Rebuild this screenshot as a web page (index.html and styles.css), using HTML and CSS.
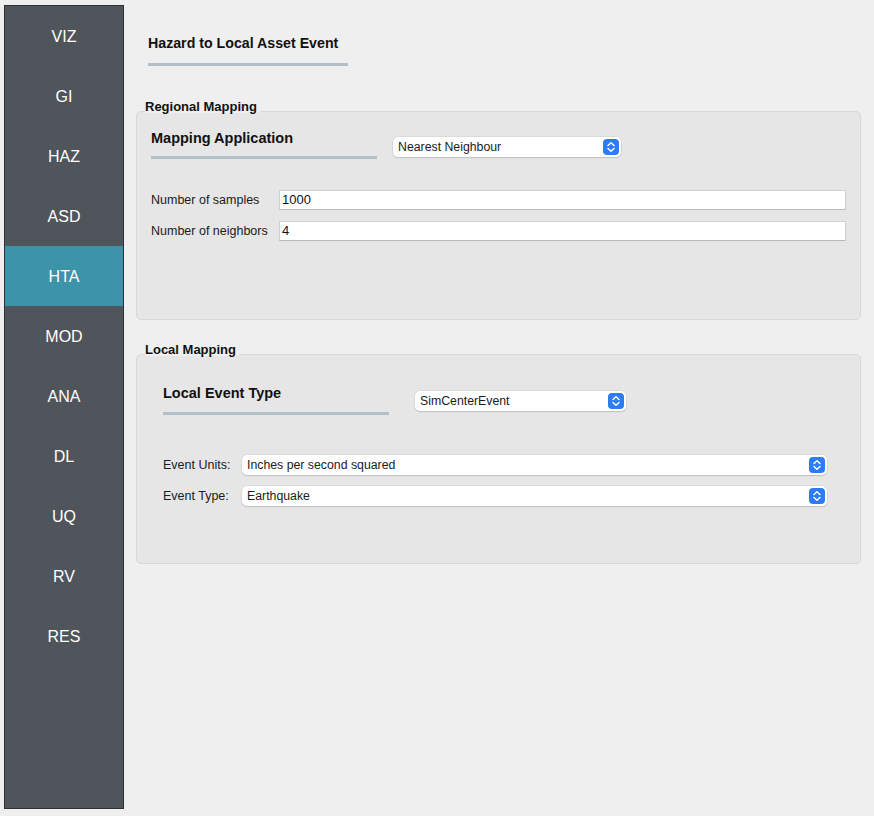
FILE: index.html
```html
<!DOCTYPE html>
<html>
<head>
<meta charset="utf-8">
<link rel="stylesheet" href="styles.css">
</head>
<body>
<div class="app">
  <nav class="sidebar">
    <div class="nav-item">VIZ</div>
    <div class="nav-item">GI</div>
    <div class="nav-item">HAZ</div>
    <div class="nav-item">ASD</div>
    <div class="nav-item active">HTA</div>
    <div class="nav-item">MOD</div>
    <div class="nav-item">ANA</div>
    <div class="nav-item">DL</div>
    <div class="nav-item">UQ</div>
    <div class="nav-item">RV</div>
    <div class="nav-item">RES</div>
  </nav>
  <main class="main">
    <div class="page-title">Hazard to Local Asset Event</div>
    <div class="title-rule"></div>

    <div class="group-label first">Regional Mapping</div>
    <section class="group regional">
      <div class="head-row">
        <div class="head-col">
          <div class="head">Mapping Application</div>
          <div class="rule"></div>
        </div>
        <div class="combo combo-map"><span>Nearest Neighbour</span><i class="arrows"><svg viewBox="0 0 16 16" width="16" height="16"><path d="M5 6.5 L8 3.8 L11 6.5 M5 9.5 L8 12.2 L11 9.5" fill="none" stroke="#fff" stroke-width="1.5" stroke-linecap="round" stroke-linejoin="round"/></svg></i></div>
      </div>
      <div class="form-grid">
        <label class="lbl">Number of samples</label>
        <div class="input">1000</div>
        <label class="lbl">Number of neighbors</label>
        <div class="input">4</div>
      </div>
    </section>

    <div class="group-label second">Local Mapping</div>
    <section class="group local">
      <div class="head-row">
        <div class="head-col">
          <div class="head">Local Event Type</div>
          <div class="rule"></div>
        </div>
        <div class="combo combo-evt"><span>SimCenterEvent</span><i class="arrows"><svg viewBox="0 0 16 16" width="16" height="16"><path d="M5 6.5 L8 3.8 L11 6.5 M5 9.5 L8 12.2 L11 9.5" fill="none" stroke="#fff" stroke-width="1.5" stroke-linecap="round" stroke-linejoin="round"/></svg></i></div>
      </div>
      <div class="form-grid2">
        <label class="lbl">Event Units:</label>
        <div class="combo"><span>Inches per second squared</span><i class="arrows"><svg viewBox="0 0 16 16" width="16" height="16"><path d="M5 6.5 L8 3.8 L11 6.5 M5 9.5 L8 12.2 L11 9.5" fill="none" stroke="#fff" stroke-width="1.5" stroke-linecap="round" stroke-linejoin="round"/></svg></i></div>
        <label class="lbl">Event Type:</label>
        <div class="combo"><span>Earthquake</span><i class="arrows"><svg viewBox="0 0 16 16" width="16" height="16"><path d="M5 6.5 L8 3.8 L11 6.5 M5 9.5 L8 12.2 L11 9.5" fill="none" stroke="#fff" stroke-width="1.5" stroke-linecap="round" stroke-linejoin="round"/></svg></i></div>
      </div>
    </section>
  </main>
</div>
</body>
</html>
```
FILE: styles.css
```css
* { box-sizing: border-box; }
html, body { margin: 0; padding: 0; }
body {
  background: #efefef;
  font-family: "Liberation Sans", Arial, sans-serif;
  color: #1b1b1b;
  width: 874px;
  height: 816px;
  overflow: hidden;
}
.app { display: flex; align-items: flex-start; }

.sidebar {
  margin: 5px 0 0 4px;
  width: 120px;
  height: 804px;
  background: #50545b;
  border: 1px solid #2e3136;
  display: flex;
  flex-direction: column;
}
.nav-item {
  height: 60px;
  padding-top: 2px;
  display: flex;
  align-items: center;
  justify-content: center;
  color: #ffffff;
  font-size: 16px;
}
.nav-item.active { background: #3d93a7; }

.main {
  flex: 1;
  padding: 33px 13px 0 12px;
}
.page-title {
  margin-left: 12px;
  font-size: 14.2px;
  font-weight: bold;
  line-height: 20px;
  color: #111;
}
.title-rule {
  margin: 10px 0 0 12px;
  width: 200px;
  height: 3px;
  background: #b2bfc6;
}
.group-label {
  position: relative;
  z-index: 1;
  display: table;
  margin-left: 9px;
  margin-bottom: -2px;
  padding-right: 3px;
  background: #efefef;
  font-size: 13px;
  font-weight: bold;
  line-height: 13px;
  color: #111;
}
.group-label.first { margin-top: 34px; }
.group-label.second { margin-top: 23px; }

.group {
  background: #e6e6e6;
  border: 1px solid #d8d8d8;
  border-radius: 5px;
}
.group.regional { height: 209px; padding: 17px 14px 0 14px; }
.group.local { height: 210px; padding: 29px 33px 0 26px; }

.head-row { display: flex; align-items: flex-start; }
.head-col { width: 226px; }
.head {
  font-size: 14.5px;
  font-weight: bold;
  line-height: 18px;
  color: #111;
}
.rule { height: 3px; background: #b2bfc6; }
.regional .rule { margin-top: 9px; }
.local .rule { margin-top: 10px; }

.combo {
  position: relative;
  height: 20px;
  background: #ffffff;
  border-radius: 5px;
  box-shadow: 0 0 0 0.5px #cfcfcf, 0 1px 1px rgba(0,0,0,0.22);
  font-size: 12.3px;
  line-height: 20px;
  padding-left: 5px;
  color: #1b1b1b;
}
.arrows {
  position: absolute;
  right: 2px;
  top: 2px;
  width: 16px;
  height: 16px;
  border-radius: 4px;
  background: #2c7cf6;
  display: flex;
}
.combo-map { width: 228px; margin: 8px 0 0 16px; }
.combo-evt { width: 211px; margin: 7px 0 0 26px; }

.form-grid {
  margin-top: 31px;
  display: grid;
  grid-template-columns: 128px 1fr;
  row-gap: 11px;
  align-items: center;
}
.form-grid2 {
  margin-top: 40px;
  display: grid;
  grid-template-columns: 79px 1fr;
  row-gap: 11px;
  align-items: center;
}
.lbl { font-size: 12.5px; color: #1b1b1b; }
.input {
  height: 20px;
  background: #ffffff;
  border: 1px solid #d0d0d0;
  border-bottom-color: #b9b9b9;
  font-size: 13px;
  line-height: 18px;
  padding-left: 2px;
  color: #111;
}
```
